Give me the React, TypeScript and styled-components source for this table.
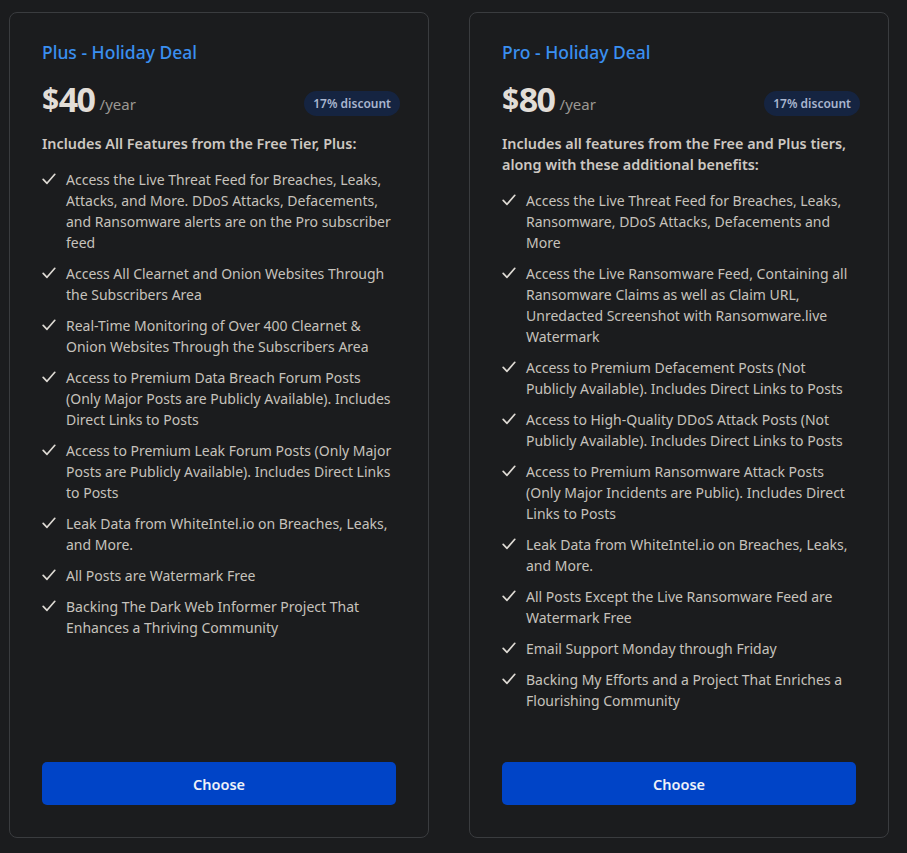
import React from "react";
import styled, { createGlobalStyle } from "styled-components";

const Global = createGlobalStyle`
  html, body { margin: 0; padding: 0; background: #1b1c1e; }
  body { font-family: "Noto Sans", "Open Sans", sans-serif; -webkit-font-smoothing: antialiased; }
  * { box-sizing: border-box; }
`;

const Page = styled.div`
  display: grid;
  grid-template-columns: 420px 420px;
  column-gap: 40px;
  padding: 12px 0 14px 9px;
  align-items: stretch;
`;

const Card = styled.div`
  display: flex;
  flex-direction: column;
  border: 1px solid #3a3c3f;
  border-radius: 8px;
  background: #1b1c1e;
  padding: 27px 32px 32px 32px;
  height: 826px;
`;

const Title = styled.h2`
  margin: 0;
  font-size: 17.5px;
  font-weight: 500;
  color: #3a8ff0;
  line-height: 24px;
`;

const PriceRow = styled.div`
  display: flex;
  align-items: flex-end;
  justify-content: space-between;
  margin-top: 15px;
`;

const Price = styled.div`
  display: flex;
  align-items: flex-end;
  gap: 5px;
`;

const Amount = styled.span`
  font-size: 34px;
  font-weight: 700;
  color: #e2ded8;
  letter-spacing: -1.5px;
  line-height: 40px;
`;

const Dollar = styled.span`
  font-size: 30px;
  vertical-align: 2px;
  margin-right: 1px;
`;

const Period = styled.span`
  font-size: 15px;
  line-height: 20px;
  padding-bottom: 5px;
  color: #9b9893;
`;

const Badge = styled.span`
  background: #152441;
  color: #a9b6cf;
  font-size: 12px;
  font-weight: 600;
  border-radius: 999px;
  padding: 4px 9px;
  line-height: 17px;
  margin-right: -4px;
  margin-bottom: 3px;
`;

const Subhead = styled.p`
  margin: 14px 0 0 0;
  font-size: 14.4px;
  font-weight: 600;
  line-height: 21px;
  color: #cdc8c2;
`;

const List = styled.ul`
  list-style: none;
  margin: 15px 0 0 0;
  padding: 0;
  display: flex;
  flex-direction: column;
  gap: 10px;
`;

const Item = styled.li`
  display: grid;
  grid-template-columns: 24px 1fr;
  font-size: 14px;
  line-height: 21px;
  color: #c6c2bc;
`;

const CheckWrap = styled.span`
  display: flex;
  align-items: flex-start;
  padding-top: 4px;
  color: #dedad4;
`;

const Button = styled.button`
  margin-top: auto;
  width: 100%;
  height: 43px;
  border: none;
  border-radius: 5px;
  background: #0044c7;
  color: #eef1f8;
  font-family: inherit;
  font-size: 14.5px;
  font-weight: 600;
  cursor: pointer;
`;

const Check = () => (
  <svg width="14" height="12" viewBox="0 0 14 12" fill="none" stroke="currentColor" strokeWidth="1.7" strokeLinecap="round" strokeLinejoin="round">
    <path d="M1.2 6.4 5 10.3 12.8 1.3" />
  </svg>
);

type Plan = { title: string; price: string; sub: string; features: string[] };

const plans: Plan[] = [
  {
    title: "Plus - Holiday Deal",
    price: "40",
    sub: "Includes All Features from the Free Tier, Plus:",
    features: [
      "Access the Live Threat Feed for Breaches, Leaks, Attacks, and More. DDoS Attacks, Defacements, and Ransomware alerts are on the Pro subscriber feed",
      "Access All Clearnet and Onion Websites Through the Subscribers Area",
      "Real-Time Monitoring of Over 400 Clearnet & Onion Websites Through the Subscribers Area",
      "Access to Premium Data Breach Forum Posts (Only Major Posts are Publicly Available). Includes Direct Links to Posts",
      "Access to Premium Leak Forum Posts (Only Major Posts are Publicly Available). Includes Direct Links to Posts",
      "Leak Data from WhiteIntel.io on Breaches, Leaks, and More.",
      "All Posts are Watermark Free",
      "Backing The Dark Web Informer Project That Enhances a Thriving Community",
    ],
  },
  {
    title: "Pro - Holiday Deal",
    price: "80",
    sub: "Includes all features from the Free and Plus tiers, along with these additional benefits:",
    features: [
      "Access the Live Threat Feed for Breaches, Leaks, Ransomware, DDoS Attacks, Defacements and More",
      "Access the Live Ransomware Feed, Containing all Ransomware Claims as well as Claim URL, Unredacted Screenshot with Ransomware.live Watermark",
      "Access to Premium Defacement Posts (Not Publicly Available). Includes Direct Links to Posts",
      "Access to High-Quality DDoS Attack Posts (Not Publicly Available). Includes Direct Links to Posts",
      "Access to Premium Ransomware Attack Posts (Only Major Incidents are Public). Includes Direct Links to Posts",
      "Leak Data from WhiteIntel.io on Breaches, Leaks, and More.",
      "All Posts Except the Live Ransomware Feed are Watermark Free",
      "Email Support Monday through Friday",
      "Backing My Efforts and a Project That Enriches a Flourishing Community",
    ],
  },
];

export default function App() {
  return (
    <>
      <Global />
      <Page>
        {plans.map((p) => (
          <Card key={p.title}>
            <Title>{p.title}</Title>
            <PriceRow>
              <Price>
                <Amount>
                  <Dollar>$</Dollar>
                  {p.price}
                </Amount>
                <Period>/year</Period>
              </Price>
              <Badge>17% discount</Badge>
            </PriceRow>
            <Subhead>{p.sub}</Subhead>
            <List>
              {p.features.map((f) => (
                <Item key={f}>
                  <CheckWrap>
                    <Check />
                  </CheckWrap>
                  <span>{f}</span>
                </Item>
              ))}
            </List>
            <Button>Choose</Button>
          </Card>
        ))}
      </Page>
    </>
  );
}
